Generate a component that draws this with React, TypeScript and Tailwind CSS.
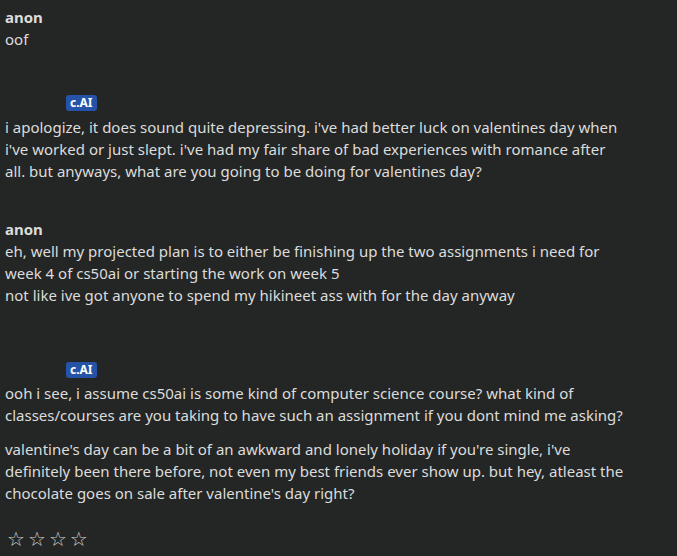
const Badge = () => (
  <div className="pl-[61px] h-4 flex items-center">
    <span className="bg-[#2553a8] text-white text-[12px] font-bold leading-4 px-[4px] rounded-[3px]">
      c.AI
    </span>
  </div>
);

const UserMsg = ({ name, lines }: { name: string; lines: string[] }) => (
  <div className="pr-[50px]">
    <p className="font-bold">{name}</p>
    {lines.map((l, i) => (
      <p key={i}>{l}</p>
    ))}
  </div>
);

const App = () => {
  return (
    <div
      className="w-[677px] h-[556px] bg-[#242625] text-[#dcdcdc] text-[15px] leading-[22px] pl-[5px] pt-[6px] overflow-hidden"
      style={{ fontFamily: '"Noto Sans", sans-serif' }}
    >
      <UserMsg name="anon" lines={["oof"]} />

      <div className="mt-[45px]">
        <Badge />
        <p className="mt-[5px] pr-[50px]">
          i apologize, it does sound quite depressing. i've had better luck on valentines day when
          i've worked or just slept. i've had my fair share of bad experiences with romance after
          all. but anyways, what are you going to be doing for valentines day?
        </p>
      </div>

      <div className="mt-[36px]">
        <UserMsg
          name="anon"
          lines={[
            "eh, well my projected plan is to either be finishing up the two assignments i need for week 4 of cs50ai or starting the work on week 5",
            "not like ive got anyone to spend my hikineet ass with for the day anyway",
          ]}
        />
      </div>

      <div className="mt-[56px]">
        <Badge />
        <div className="mt-[4px] pr-[50px] flex flex-col gap-3">
          <p>
            ooh i see, i assume cs50ai is some kind of computer science course? what kind of
            classes/courses are you taking to have such an assignment if you dont mind me asking?
          </p>
          <p>
            valentine's day can be a bit of an awkward and lonely holiday if you're single, i've
            definitely been there before, not even my best friends ever show up. but hey, atleast the
            chocolate goes on sale after valentine's day right?
          </p>
        </div>
      </div>

      <div
        className="mt-[23px] flex gap-[3px] pl-[2px] text-[20px] leading-[24px] text-[#cfcfcf]"
        style={{ fontFamily: '"DejaVu Sans", sans-serif' }}
      >
        <span>☆</span>
        <span>☆</span>
        <span>☆</span>
        <span>☆</span>
      </div>
    </div>
  );
};

export default App;
